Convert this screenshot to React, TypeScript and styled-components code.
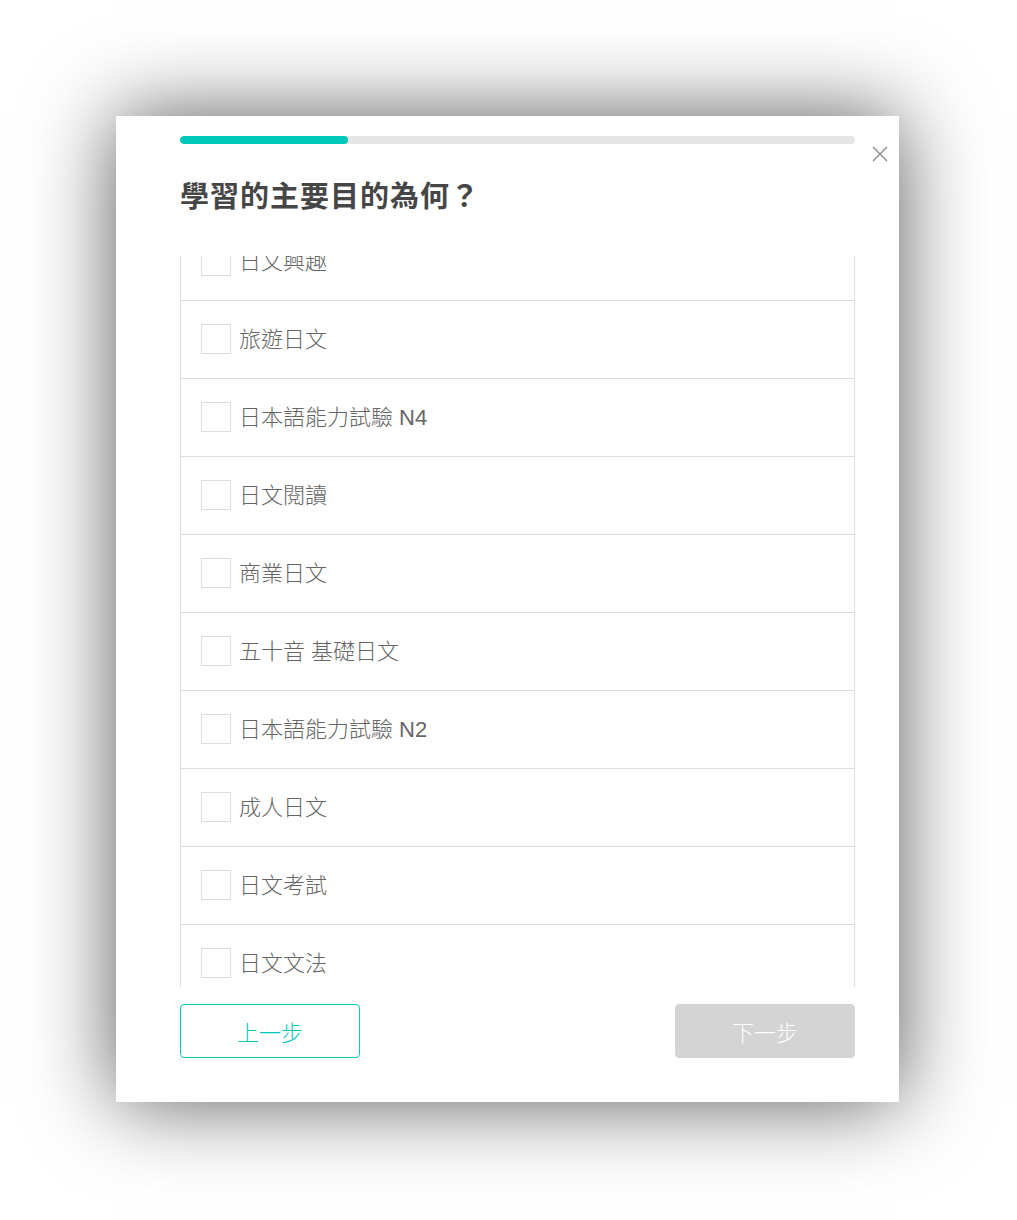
import React, { useEffect, useRef } from 'react';
import styled, { createGlobalStyle } from 'styled-components';

const GlobalStyle = createGlobalStyle`
  html, body {
    margin: 0;
    padding: 0;
    background: #ffffff;
    font-family: 'Liberation Sans', 'Noto Sans CJK TC', sans-serif;
  }
`;

const Page = styled.div`
  width: 1017px;
  height: 1220px;
  padding: 116px 0 0 116px;
  box-sizing: border-box;
`;

const Modal = styled.div`
  position: relative;
  width: 783px;
  height: 986px;
  box-sizing: border-box;
  padding: 20px 44px 44px 64px;
  background: #ffffff;
  box-shadow: 0 0 80px 0 rgba(0, 0, 0, 0.65);
  display: flex;
  flex-direction: column;
`;

const CloseButton = styled.button`
  position: absolute;
  top: 29px;
  right: 10px;
  width: 18px;
  height: 18px;
  padding: 0;
  border: none;
  background: none;
  cursor: pointer;
  display: flex;
  align-items: center;
  justify-content: center;
`;

const ProgressTrack = styled.div`
  height: 8px;
  border-radius: 4px;
  background: #e6e6e6;
  overflow: hidden;
`;

const ProgressFill = styled.div`
  height: 100%;
  border-radius: 4px;
  background: #00c9b7;
`;

const Title = styled.h2`
  margin: 35px 0 0 0;
  font-size: 29px;
  line-height: 36px;
  font-weight: 700;
  color: #464646;
  letter-spacing: 1px;
`;

const OptionList = styled.div`
  margin-top: 41px;
  height: 732px;
  overflow-y: auto;
  border-left: 1px solid #dddddd;
  border-right: 1px solid #dddddd;
  scrollbar-width: none;

  &::-webkit-scrollbar {
    display: none;
  }
`;

const OptionRow = styled.label`
  display: flex;
  align-items: center;
  height: 78px;
  box-sizing: border-box;
  padding-left: 20px;
  border-bottom: 1px solid #dddddd;
  cursor: pointer;
`;

const CheckBox = styled.span`
  width: 30px;
  height: 30px;
  box-sizing: border-box;
  border: 1px solid #dddddd;
  background: #ffffff;
  flex-shrink: 0;
`;

const OptionText = styled.span`
  margin: -4px 0 0 8px;
  font-size: 22px;
  font-weight: 300;
  color: #666666;
  font-family: 'Liberation Sans', 'Noto Sans CJK TC', sans-serif;
`;

const Footer = styled.div`
  margin-top: 17px;
  display: flex;
  justify-content: space-between;
`;

const StepButton = styled.button<{ $primary?: boolean }>`
  width: 180px;
  height: 54px;
  border-radius: 4px;
  font-size: 22px;
  font-weight: 300;
  font-family: 'Liberation Sans', 'Noto Sans CJK TC', sans-serif;
  cursor: pointer;
  border: 1px solid ${p => (p.$primary ? '#d4d4d4' : '#00c9b7')};
  background: ${p => (p.$primary ? '#d4d4d4' : '#ffffff')};
  color: ${p => (p.$primary ? '#ffffff' : '#00c9b7')};
`;

const options = [
  '日文興趣',
  '旅遊日文',
  '日本語能力試驗 N4',
  '日文閱讀',
  '商業日文',
  '五十音 基礎日文',
  '日本語能力試驗 N2',
  '成人日文',
  '日文考試',
  '日文文法',
];

export default function App() {
  const listRef = useRef<HTMLDivElement>(null);

  useEffect(() => {
    // the reference shows the list scrolled a little way down
    if (listRef.current) listRef.current.scrollTop = 33;
  }, []);

  return (
    <>
      <GlobalStyle />
      <Page>
        <Modal>
          <CloseButton aria-label="close">
            <svg width="16" height="16" viewBox="0 0 16 16">
              <path d="M1 1 L15 15 M15 1 L1 15" stroke="#8a8a8a" strokeWidth="1.4" fill="none" />
            </svg>
          </CloseButton>
          <ProgressTrack>
            <ProgressFill style={{ width: `${(168 / 675) * 100}%` }} />
          </ProgressTrack>
          <Title>學習的主要目的為何？</Title>
          <OptionList ref={listRef}>
            {options.map(o => (
              <OptionRow key={o}>
                <CheckBox />
                <OptionText>{o}</OptionText>
              </OptionRow>
            ))}
          </OptionList>
          <Footer>
            <StepButton>上一步</StepButton>
            <StepButton $primary>下一步</StepButton>
          </Footer>
        </Modal>
      </Page>
    </>
  );
}
